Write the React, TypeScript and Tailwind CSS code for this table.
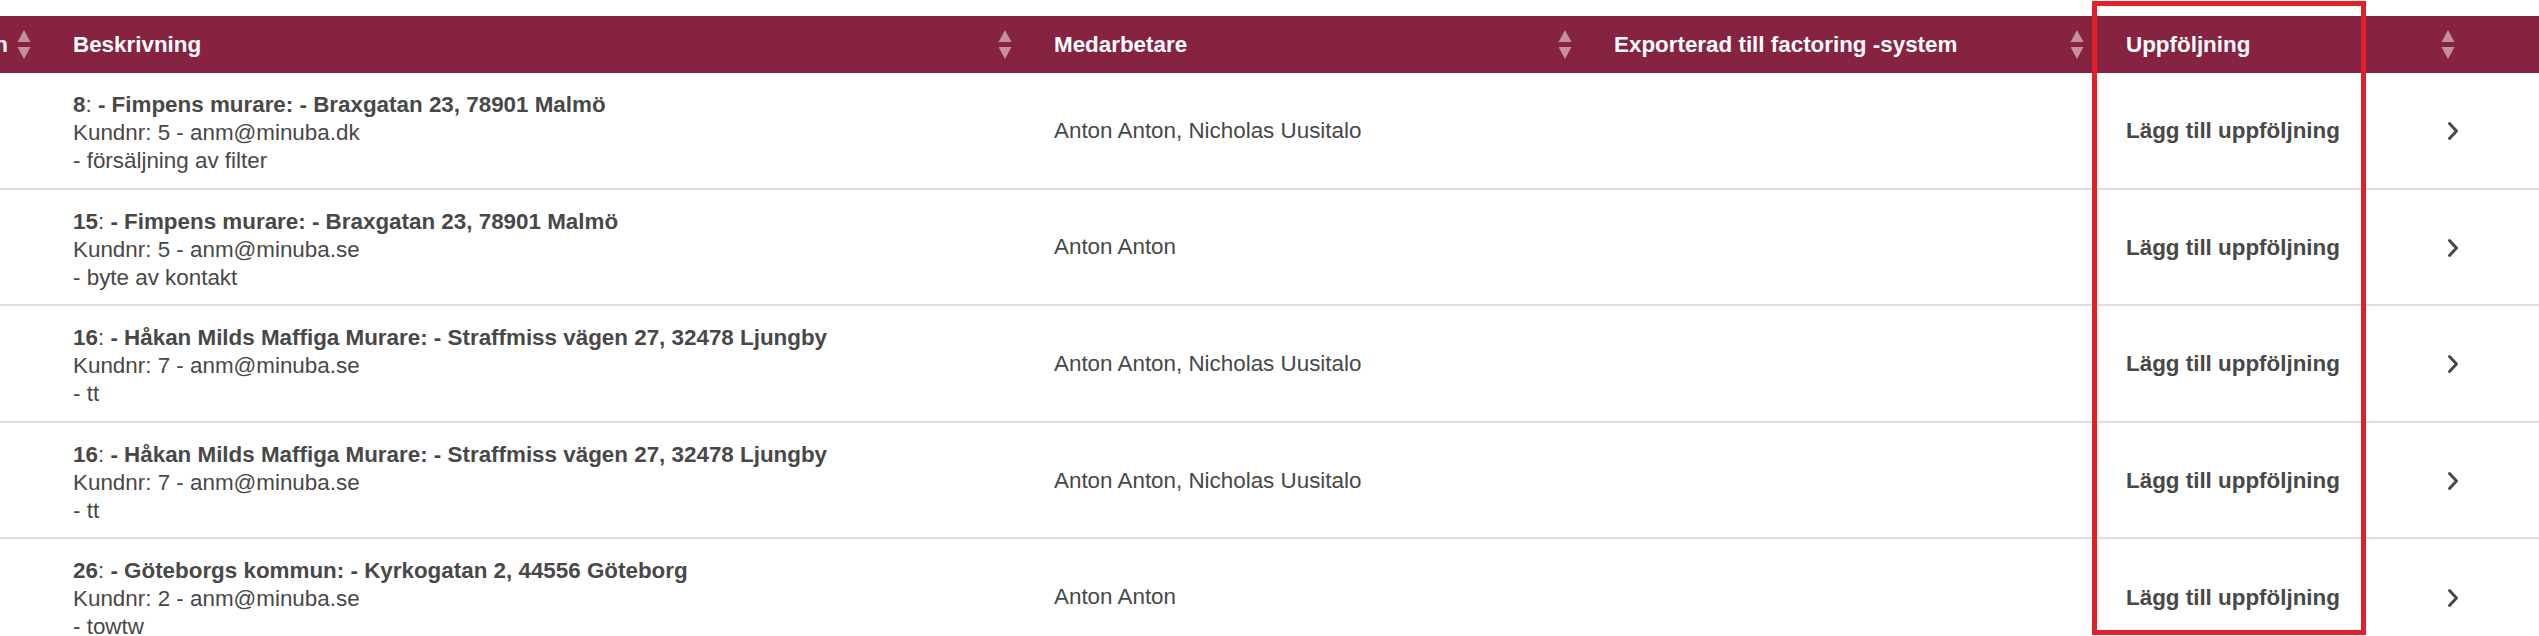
import React from "react";

type Row = {
  num: string;
  title: string;
  kund: string;
  note: string;
  staff: string;
};

const rows: Row[] = [
  {
    num: "8",
    title: "- Fimpens murare: - Braxgatan 23, 78901 Malmö",
    kund: "Kundnr: 5 - anm@minuba.dk",
    note: "- försäljning av filter",
    staff: "Anton Anton, Nicholas Uusitalo",
  },
  {
    num: "15",
    title: "- Fimpens murare: - Braxgatan 23, 78901 Malmö",
    kund: "Kundnr: 5 - anm@minuba.se",
    note: "- byte av kontakt",
    staff: "Anton Anton",
  },
  {
    num: "16",
    title: "- Håkan Milds Maffiga Murare: - Straffmiss vägen 27, 32478 Ljungby",
    kund: "Kundnr: 7 - anm@minuba.se",
    note: "- tt",
    staff: "Anton Anton, Nicholas Uusitalo",
  },
  {
    num: "16",
    title: "- Håkan Milds Maffiga Murare: - Straffmiss vägen 27, 32478 Ljungby",
    kund: "Kundnr: 7 - anm@minuba.se",
    note: "- tt",
    staff: "Anton Anton, Nicholas Uusitalo",
  },
  {
    num: "26",
    title: "- Göteborgs kommun: - Kyrkogatan 2, 44556 Göteborg",
    kund: "Kundnr: 2 - anm@minuba.se",
    note: "- towtw",
    staff: "Anton Anton",
  },
];

const cols = "grid grid-cols-[45px_981px_560px_512px_371px_1fr]";

function SortArrows() {
  return (
    <svg width="14" height="29" viewBox="0 0 14 29" className="shrink-0">
      <polygon points="7,0 13.5,12 0.5,12" fill="#c3909f" />
      <polygon points="0.5,17 13.5,17 7,29" fill="#c3909f" />
    </svg>
  );
}

function HeadCell({ label, first }: { label?: string; first?: boolean }) {
  if (first) {
    return (
      <div className="flex items-center justify-end pr-[14px] overflow-hidden">
        <span className="whitespace-nowrap mr-[9px]">Skapad den</span>
        <SortArrows />
      </div>
    );
  }
  return (
    <div className="flex items-center justify-between pl-[28px] pr-[14px]">
      <span className="whitespace-nowrap">{label}</span>
      {label !== undefined ? <SortArrows /> : null}
    </div>
  );
}

function Chevron() {
  return (
    <svg width="12" height="20" viewBox="0 0 12 20" className="shrink-0">
      <polyline
        points="2.5,2.5 9.5,10 2.5,17.5"
        fill="none"
        stroke="#484848"
        strokeWidth="3"
        strokeLinecap="round"
        strokeLinejoin="round"
      />
    </svg>
  );
}

export default function App() {
  return (
    <div
      className="relative h-[636px] w-[2539px] overflow-hidden bg-white text-[22.4px] leading-[28px] text-[#484848]"
      style={{ fontFamily: '"Liberation Sans", Arial, Helvetica, sans-serif' }}
    >
      <div className="pt-[16px]">
        <div className={`${cols} h-[57px] bg-[#862341] font-bold text-white`}>
          <HeadCell first />
          <HeadCell label="Beskrivning" />
          <HeadCell label="Medarbetare" />
          <HeadCell label="Exporterad till factoring -system" />
          <HeadCell label="Uppföljning" />
          <div />
        </div>
        {rows.map((r, i) => (
          <div
            key={i}
            className={`${cols} h-[116.6px] border-b-[2px] border-[#dddddd]`}
          >
            <div />
            <div className="flex flex-col justify-start pl-[28px] pt-[18px]">
              <div className="whitespace-nowrap">
                <span className="font-bold">{r.num}</span>:{" "}
                <span className="font-bold">{r.title}</span>
              </div>
              <div className="whitespace-nowrap">{r.kund}</div>
              <div className="whitespace-nowrap">{r.note}</div>
            </div>
            <div className="flex items-center pl-[28px] pt-[1px]">
              <span className="whitespace-nowrap">{r.staff}</span>
            </div>
            <div />
            <div className="flex items-center justify-between pl-[28px] pr-[10px] pt-[2px]">
              <span className="whitespace-nowrap font-bold">
                Lägg till uppföljning
              </span>
              <Chevron />
            </div>
            <div />
          </div>
        ))}
      </div>
      <div className="pointer-events-none absolute left-[2092px] top-[1px] h-[634px] w-[274px] border-[5px] border-[#e3202a]" />
    </div>
  );
}
